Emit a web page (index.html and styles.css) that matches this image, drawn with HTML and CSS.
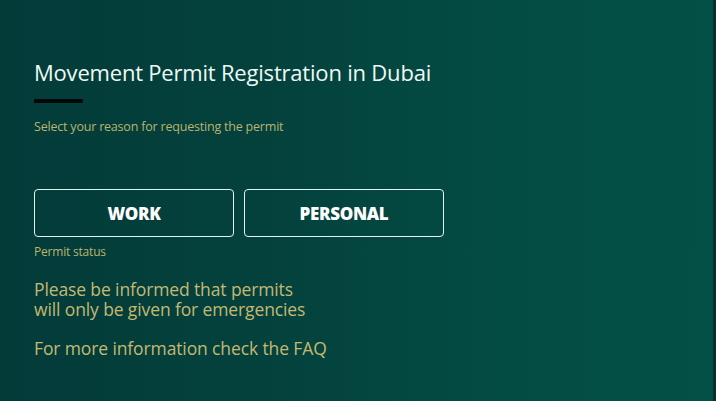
FILE: index.html
```html
<!DOCTYPE html>
<html lang="en">
<head>
<meta charset="utf-8">
<title>Movement Permit Registration in Dubai</title>
<link rel="stylesheet" href="styles.css">
</head>
<body>
<main class="page">
  <section class="content">
    <h1 class="title">Movement Permit Registration in Dubai</h1>
    <div class="rule"></div>
    <p class="hint">Select your reason for requesting the permit</p>
    <div class="choices">
      <button class="choice">WORK</button>
      <button class="choice">PERSONAL</button>
    </div>
    <p class="status">Permit status</p>
    <p class="notice">Please be informed that permits<br>will only be given for emergencies</p>
    <p class="notice faq">For more information check the FAQ</p>
  </section>
  <div class="edge"></div>
</main>
</body>
</html>
```
FILE: styles.css
```css
html, body {
  margin: 0;
  padding: 0;
  width: 716px;
  height: 401px;
  overflow: hidden;
}
body {
  font-family: "Open Sans", "Noto Sans", sans-serif;
}
.page {
  display: flex;
  width: 716px;
  height: 401px;
  background: linear-gradient(90deg, #033b39 0%, #04423d 40%, #034c44 70%, #035046 100%);
}
.content {
  flex: 1;
  padding: 55px 0 0 34px;
}
.edge {
  width: 3px;
  background: #0b2f2b;
}
.title {
  margin: 0;
  font-size: 22px;
  font-weight: 400;
  line-height: 34px;
  color: #eefaf6;
  letter-spacing: -0.2px;
}
.rule {
  width: 49px;
  height: 4px;
  margin-top: 10px;
  background: #020807;
  border-radius: 1px;
}
.hint {
  margin: 15px 0 0;
  font-size: 12.5px;
  line-height: 18px;
  color: #b9b46e;
  letter-spacing: -0.2px;
}
.choices {
  display: flex;
  gap: 10px;
  margin-top: 53px;
}
.choice {
  width: 200px;
  height: 48px;
  background: transparent;
  border: 1px solid #dff4ef;
  border-radius: 4px;
  color: #ffffff;
  font-family: "Open Sans", "Noto Sans", sans-serif;
  font-size: 17px;
  font-weight: 800;
  letter-spacing: -0.3px;
  padding: 0;
}
.status {
  margin: 7px 0 0;
  font-size: 12px;
  line-height: 16px;
  color: #b9b46e;
  letter-spacing: -0.2px;
}
.notice {
  margin: 19px 0 0;
  font-size: 17.5px;
  line-height: 20px;
  color: #c3b971;
  letter-spacing: -0.12px;
}
.faq {
  margin-top: 19px;
}
```
